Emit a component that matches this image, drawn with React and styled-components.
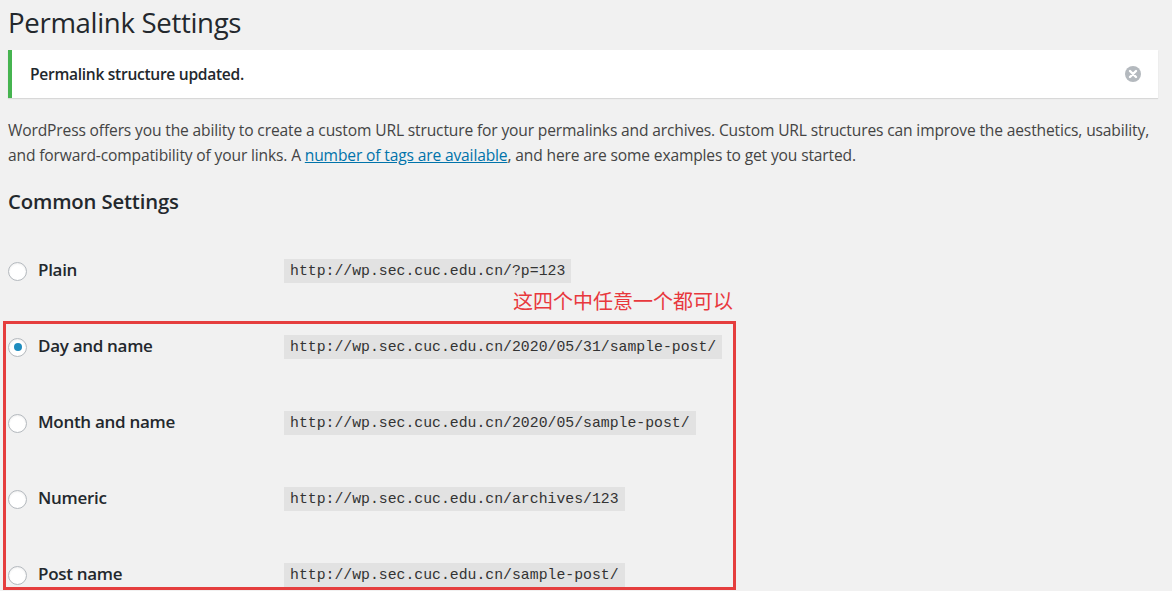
import React from 'react';
import styled, { createGlobalStyle } from 'styled-components';

const GlobalStyle = createGlobalStyle`
  html, body {
    margin: 0;
    padding: 0;
    background: #f1f1f1;
  }
  body {
    font-family: 'Open Sans', 'Noto Sans', sans-serif;
    color: #444;
  }
`;

const options = [
  { label: 'Plain', url: 'http://wp.sec.cuc.edu.cn/?p=123' },
  { label: 'Day and name', url: 'http://wp.sec.cuc.edu.cn/2020/05/31/sample-post/', checked: true },
  { label: 'Month and name', url: 'http://wp.sec.cuc.edu.cn/2020/05/sample-post/' },
  { label: 'Numeric', url: 'http://wp.sec.cuc.edu.cn/archives/123' },
  { label: 'Post name', url: 'http://wp.sec.cuc.edu.cn/sample-post/' },
];

const App = () => {
  const [plain, ...rest] = options;
  return (
    <Wrap>
      <GlobalStyle />
      <Title>Permalink Settings</Title>
      <Notice>
        <NoticeText>Permalink structure updated.</NoticeText>
        <Dismiss aria-label="Dismiss">
          <svg width="16" height="16" viewBox="0 0 16 16">
            <circle cx="8" cy="8" r="8" fill="#b4b9be" />
            <path d="M5 5 L11 11 M11 5 L5 11" stroke="#fff" strokeWidth="2.4" strokeLinecap="round" />
          </svg>
        </Dismiss>
      </Notice>
      <Intro>
        WordPress offers you the ability to create a custom URL structure for your permalinks and archives. Custom URL structures can improve the aesthetics, usability,
        <br />
        and forward-compatibility of your links. A <Link href="#">number of tags are available</Link>, and here are some examples to get you started.
      </Intro>
      <SubTitle>Common Settings</SubTitle>
      <PlainList>
        <Option {...plain} />
      </PlainList>
      <Annotation>
        <Caption>这四个中任意一个都可以</Caption>
        <RedBox>
          {rest.map((o) => (
            <Option key={o.label} {...o} />
          ))}
        </RedBox>
      </Annotation>
    </Wrap>
  );
};

const Option = ({ label, url, checked }) => (
  <Row>
    <LabelCell>
      <Radio $checked={checked} />
      <LabelText>{label}</LabelText>
    </LabelCell>
    <Code>{url}</Code>
  </Row>
);

const Wrap = styled.div`
  padding: 0 14px 0 8px;
`;

const Title = styled.h1`
  margin: 0;
  padding-top: 4px;
  font-size: 27.6px;
  line-height: 36px;
  font-weight: 400;
  letter-spacing: -0.33px;
  color: #23282d;
`;

const Notice = styled.div`
  margin-top: 10px;
  height: 48px;
  display: flex;
  align-items: center;
  justify-content: space-between;
  background: #fff;
  border-left: 4px solid #46b450;
  box-shadow: 0 1px 1px rgba(0, 0, 0, 0.1);
  padding: 0 17px 0 18px;
  box-sizing: border-box;
`;

const NoticeText = styled.span`
  font-size: 15.6px;
  font-weight: 600;
  letter-spacing: -0.3px;
  color: #23282d;
`;

const Dismiss = styled.span`
  display: flex;
  width: 16px;
  height: 16px;
`;

const Intro = styled.p`
  margin: 20px 0 0;
  font-size: 15.6px;
  line-height: 25px;
  letter-spacing: -0.15px;
  white-space: nowrap;
  color: #444;
`;

const Link = styled.a`
  color: #0073aa;
  text-decoration: underline;
`;

const SubTitle = styled.h2`
  margin: 20px 0 0;
  font-size: 20.3px;
  line-height: 26px;
  font-weight: 600;
  letter-spacing: -0.15px;
  color: #23282d;
`;

const PlainList = styled.div`
  margin-top: 45px;
`;

const Annotation = styled.div`
  width: 733px;
  margin-left: -5px;
  margin-top: 8px;
`;

const Caption = styled.div`
  text-align: right;
  padding-right: 3px;
  font-family: 'Noto Sans CJK SC', sans-serif;
  font-size: 20px;
  line-height: 20px;
  color: #e8383d;
`;

const RedBox = styled.div`
  margin-top: 10px;
  border: 3px solid #e53e3e;
  padding: 11px 0 0 2px;
  display: flex;
  flex-direction: column;
  gap: 52px;
`;

const Row = styled.div`
  display: flex;
  align-items: center;
  height: 24px;
`;

const LabelCell = styled.div`
  width: 276px;
  display: flex;
  align-items: center;
`;

const Radio = styled.span`
  width: 19px;
  height: 19px;
  box-sizing: border-box;
  border-radius: 50%;
  border: 1px solid #b4b9be;
  background: #fff;
  box-shadow: inset 0 1px 2px rgba(0, 0, 0, 0.07);
  display: flex;
  align-items: center;
  justify-content: center;
  margin-right: 11px;

  &::after {
    content: '';
    display: ${(p) => (p.$checked ? 'block' : 'none')};
    width: 8px;
    height: 8px;
    border-radius: 50%;
    background: #1e8cbe;
  }
`;

const LabelText = styled.span`
  font-size: 17px;
  line-height: 20px;
  margin-top: -3px;
  font-weight: 600;
  letter-spacing: -0.3px;
  color: #23282d;
`;

const Code = styled.code`
  font-family: 'Liberation Mono', monospace;
  font-size: 14.8px;
  line-height: 24px;
  padding: 0 6px;
  background: #e2e2e2;
  color: #333;
`;

export default App;
